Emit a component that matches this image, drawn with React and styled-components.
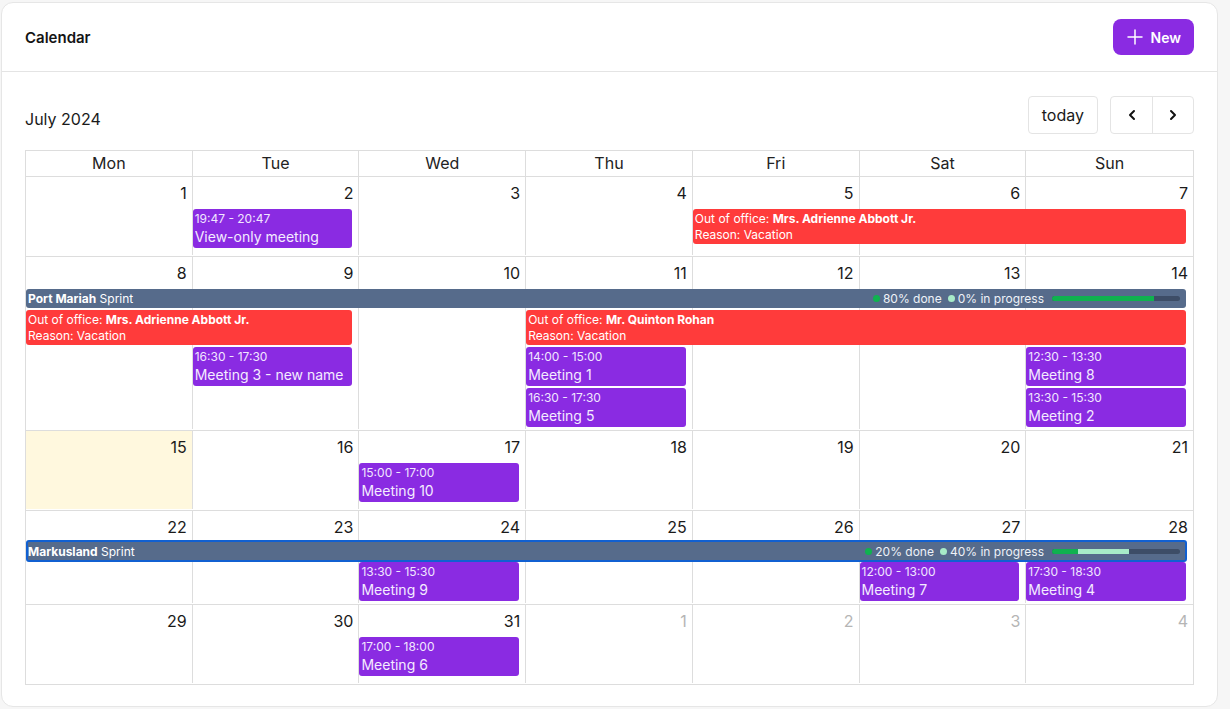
import React from "react";
import styled, { createGlobalStyle, css } from "styled-components";
import { Plus, ChevronLeft, ChevronRight } from "lucide-react";

const GlobalStyle = createGlobalStyle`
  html, body {
    margin: 0;
    padding: 0;
    background: #f6f6f6;
  }
  body {
    font-family: Inter, "Noto Sans", "Liberation Sans", sans-serif;
    color: #1f1f1f;
  }
  * { box-sizing: border-box; }
`;

const Page = styled.div`
  padding: 2px 12px 2px 1px;
  height: 709px;
`;

const Card = styled.div`
  background: #fff;
  border: 1px solid #e6e6e6;
  border-radius: 12px;
  height: 705px;
  display: flex;
  flex-direction: column;
`;

const CardHeader = styled.div`
  flex-shrink: 0;
  height: 69px;
  padding: 0 23px;
  border-bottom: 1px solid #e4e4e4;
  display: flex;
  align-items: center;
  justify-content: space-between;
`;

const Title = styled.h1`
  margin: 0;
  font-size: 15px;
  font-weight: 600;
  color: #141414;
`;

const NewButton = styled.button`
  display: flex;
  align-items: center;
  gap: 4px;
  height: 36px;
  padding: 0 13px 0 10px;
  border: none;
  border-radius: 8px;
  background: #8a2be2;
  color: #fff;
  font-family: inherit;
  font-size: 14px;
  font-weight: 600;
`;

const Body = styled.div`
  padding: 24px 23px 20px;
`;

const Toolbar = styled.div`
  display: flex;
  align-items: center;
  justify-content: space-between;
  height: 38px;
  margin-bottom: 16px;
`;

const MonthLabel = styled.h2`
  margin: 8px 0 0;
  font-size: 16px;
  font-weight: 400;
  color: #1a1a1a;
`;

const ToolGroup = styled.div`
  display: flex;
  gap: 12px;
`;

const ToolButton = styled.button`
  height: 38px;
  padding: 0 13px;
  background: #fff;
  border: 1px solid #e4e4e4;
  border-radius: 4px;
  font-family: inherit;
  font-size: 16px;
  color: #1a1a1a;
`;

const NavGroup = styled.div`
  display: flex;
  border: 1px solid #e4e4e4;
  border-radius: 4px;
  height: 38px;
`;

const NavButton = styled.button`
  width: 41px;
  display: flex;
  align-items: center;
  justify-content: center;
  background: none;
  border: none;
  color: #111;
  & + & {
    border-left: 1px solid #e4e4e4;
  }
`;

const Table = styled.div`
  border: 1px solid #dddddd;
`;

const HeadRow = styled.div`
  display: grid;
  grid-template-columns: repeat(7, 1fr);
  height: 25px;
`;

const HeadCell = styled.div`
  text-align: center;
  font-size: 16px;
  line-height: 25px;
  color: #222;
  &:not(:last-child) {
    border-right: 1px solid #dddddd;
  }
`;

const Week = styled.div`
  display: grid;
  grid-template-columns: repeat(7, 1fr);
  grid-template-rows: 32px repeat(${(p) => p.$rows}, auto) 1fr;
  min-height: 80px;
  padding-bottom: 1px;
  border-top: 1px solid #dddddd;
`;

const DayCell = styled.div`
  grid-row: 1 / -1;
  grid-column: ${(p) => p.$col};
  background: ${(p) => (p.$today ? "#fff8de" : "transparent")};
  ${(p) =>
    p.$col < 7 &&
    css`
      border-right: 1px solid #dddddd;
    `}
`;

const DayNumber = styled.div`
  padding: 4px 5px 0 0;
  text-align: right;
  font-size: 16px;
  line-height: 24px;
  color: ${(p) => (p.$muted ? "#b5b5b5" : "#1a1a1a")};
`;

const Slot = styled.div`
  grid-row: ${(p) => p.$row + 1};
  grid-column: ${(p) => p.$col} / span ${(p) => p.$span};
  margin: ${(p) => (p.$selected ? "-3px 6px 0 0" : "0 7px 2px 0")};
  min-width: 0;
  position: relative;
  z-index: 1;
`;

const Meeting = styled.div`
  background: #8a2be2;
  color: #fff;
  border-radius: 3px;
  padding: 2px 2px 1px;
  height: 39px;
`;

const MeetingTime = styled.div`
  font-size: 12px;
  line-height: 16px;
  color: #f1e6ff;
`;

const MeetingTitle = styled.div`
  font-size: 14px;
  line-height: 19px;
  white-space: nowrap;
  overflow: hidden;
  color: #f4ecff;
`;

const Absence = styled.div`
  background: #ff3b3b;
  color: #fff;
  border-radius: 3px;
  padding: 2px 2px 1px;
  height: 35px;
  font-size: 12px;
  line-height: 16px;
  b {
    font-weight: 700;
  }
`;

const Sprint = styled.div`
  display: flex;
  align-items: center;
  justify-content: space-between;
  height: 19px;
  padding: 0 6px 0 2px;
  border-radius: 3px;
  background: #566b8b;
  color: #fff;
  font-size: 12px;
  line-height: 17px;
  ${(p) =>
    p.$selected &&
    css`
      height: 22px;
      padding: 0 5px 0 0;
      border: 2px solid #1160d1;
    `}
  b {
    font-weight: 700;
  }
`;

const SprintStats = styled.div`
  display: flex;
  align-items: center;
  gap: 6px;
  color: #eef2f8;
`;

const Stat = styled.span`
  display: flex;
  align-items: center;
  gap: 3px;
  &::before {
    content: "";
    width: 7px;
    height: 7px;
    border-radius: 50%;
    background: ${(p) => p.$dot};
  }
`;

const Progress = styled.div`
  display: flex;
  width: 128px;
  height: 5px;
  margin-left: 2px;
  border-radius: 3px;
  overflow: hidden;
  background: #3d4d67;
`;

const ProgressPart = styled.div`
  height: 100%;
  background: ${(p) => p.$color};
`;

const DONE = "#0fb24f";
const DOING = "#a7ebc8";

const weeks = [
  {
    days: [1, 2, 3, 4, 5, 6, 7],
    events: [
      { row: 1, col: 2, span: 1, kind: "meeting", time: "19:47 - 20:47", title: "View-only meeting" },
      { row: 1, col: 5, span: 3, kind: "absence", who: "Mrs. Adrienne Abbott Jr.", reason: "Vacation" },
    ],
  },
  {
    days: [8, 9, 10, 11, 12, 13, 14],
    events: [
      { row: 1, col: 1, span: 7, kind: "sprint", name: "Port Mariah", done: 80, doing: 0 },
      { row: 2, col: 1, span: 2, kind: "absence", who: "Mrs. Adrienne Abbott Jr.", reason: "Vacation" },
      { row: 2, col: 4, span: 4, kind: "absence", who: "Mr. Quinton Rohan", reason: "Vacation" },
      { row: 3, col: 2, span: 1, kind: "meeting", time: "16:30 - 17:30", title: "Meeting 3 - new name" },
      { row: 3, col: 4, span: 1, kind: "meeting", time: "14:00 - 15:00", title: "Meeting 1" },
      { row: 3, col: 7, span: 1, kind: "meeting", time: "12:30 - 13:30", title: "Meeting 8" },
      { row: 4, col: 4, span: 1, kind: "meeting", time: "16:30 - 17:30", title: "Meeting 5" },
      { row: 4, col: 7, span: 1, kind: "meeting", time: "13:30 - 15:30", title: "Meeting 2" },
    ],
  },
  {
    days: [15, 16, 17, 18, 19, 20, 21],
    today: 1,
    events: [
      { row: 1, col: 3, span: 1, kind: "meeting", time: "15:00 - 17:00", title: "Meeting 10" },
    ],
  },
  {
    days: [22, 23, 24, 25, 26, 27, 28],
    events: [
      { row: 1, col: 1, span: 7, kind: "sprint", name: "Markusland", done: 20, doing: 40, selected: true },
      { row: 2, col: 3, span: 1, kind: "meeting", time: "13:30 - 15:30", title: "Meeting 9" },
      { row: 2, col: 6, span: 1, kind: "meeting", time: "12:00 - 13:00", title: "Meeting 7" },
      { row: 2, col: 7, span: 1, kind: "meeting", time: "17:30 - 18:30", title: "Meeting 4" },
    ],
  },
  {
    days: [29, 30, 31, 1, 2, 3, 4],
    outsideFrom: 4,
    events: [
      { row: 1, col: 3, span: 1, kind: "meeting", time: "17:00 - 18:00", title: "Meeting 6" },
    ],
  },
];

const weekdays = ["Mon", "Tue", "Wed", "Thu", "Fri", "Sat", "Sun"];

function EventBody({ ev }) {
  if (ev.kind === "meeting") {
    return (
      <Meeting>
        <MeetingTime>{ev.time}</MeetingTime>
        <MeetingTitle>{ev.title}</MeetingTitle>
      </Meeting>
    );
  }
  if (ev.kind === "absence") {
    return (
      <Absence>
        <div>
          Out of office: <b>{ev.who}</b>
        </div>
        <div>Reason: {ev.reason}</div>
      </Absence>
    );
  }
  return (
    <Sprint $selected={ev.selected}>
      <span>
        <b>{ev.name}</b> Sprint
      </span>
      <SprintStats>
        <Stat $dot={DONE}>{ev.done}% done</Stat>
        <Stat $dot={DOING}>{ev.doing}% in progress</Stat>
        <Progress>
          <ProgressPart $color={DONE} style={{ width: `${ev.done}%` }} />
          <ProgressPart $color={DOING} style={{ width: `${ev.doing}%` }} />
        </Progress>
      </SprintStats>
    </Sprint>
  );
}

export default function App() {
  return (
    <>
      <GlobalStyle />
      <Page>
        <Card>
          <CardHeader>
            <Title>Calendar</Title>
            <NewButton>
              <Plus size={24} strokeWidth={1.5} />
              New
            </NewButton>
          </CardHeader>
          <Body>
            <Toolbar>
              <MonthLabel>July 2024</MonthLabel>
              <ToolGroup>
                <ToolButton>today</ToolButton>
                <NavGroup>
                  <NavButton>
                    <ChevronLeft size={16} strokeWidth={3} />
                  </NavButton>
                  <NavButton>
                    <ChevronRight size={16} strokeWidth={3} />
                  </NavButton>
                </NavGroup>
              </ToolGroup>
            </Toolbar>
            <Table>
              <HeadRow>
                {weekdays.map((d) => (
                  <HeadCell key={d}>{d}</HeadCell>
                ))}
              </HeadRow>
              {weeks.map((w, wi) => {
                const rows = Math.max(...w.events.map((e) => e.row));
                return (
                  <Week key={wi} $rows={rows}>
                    {w.days.map((d, i) => (
                      <DayCell key={i} $col={i + 1} $today={w.today === i + 1}>
                        <DayNumber $muted={w.outsideFrom && i + 1 >= w.outsideFrom}>
                          {d}
                        </DayNumber>
                      </DayCell>
                    ))}
                    {w.events.map((ev, ei) => (
                      <Slot
                        key={ei}
                        $row={ev.row}
                        $col={ev.col}
                        $span={ev.span}
                        $selected={ev.selected}
                      >
                        <EventBody ev={ev} />
                      </Slot>
                    ))}
                  </Week>
                );
              })}
            </Table>
          </Body>
        </Card>
      </Page>
    </>
  );
}
